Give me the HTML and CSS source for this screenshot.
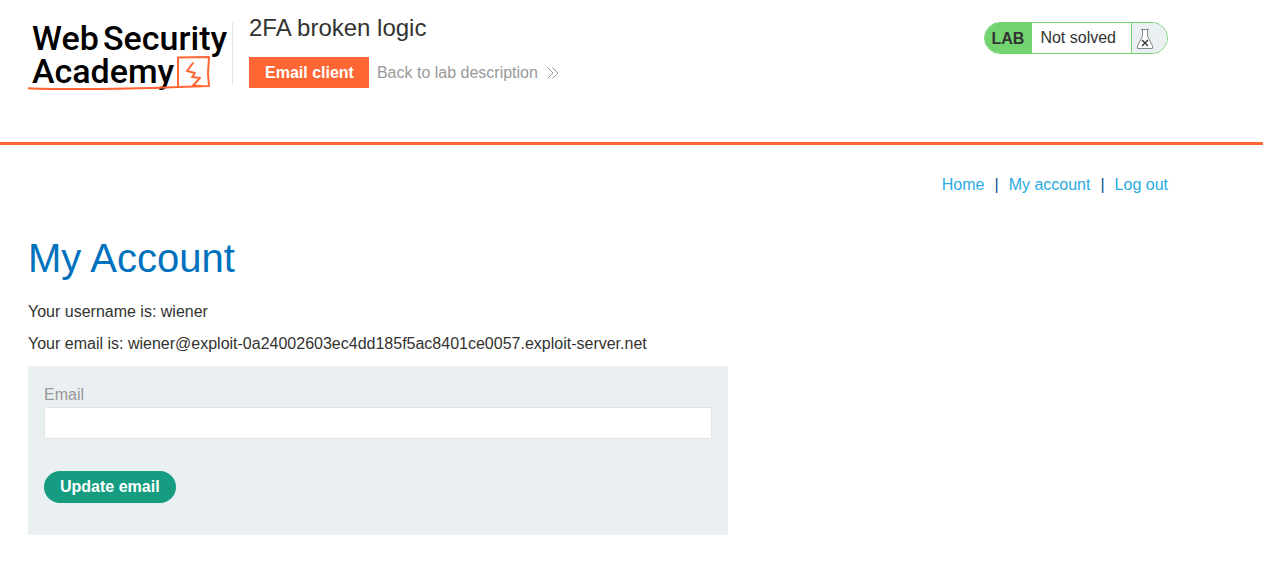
FILE: index.html
```
<!DOCTYPE html>
<html lang="en">
<head>
<meta charset="utf-8">
<meta name="viewport" content="width=device-width, initial-scale=1">
<title>2FA broken logic</title>
<link rel="stylesheet" href="styles.css">
</head>
<body>
<header class="lab-header">
  <div class="container lab-header-row">
    <a class="logo" href="#" aria-label="Web Security Academy">
      <svg width="204" height="72" viewBox="0 0 204 72" aria-hidden="true">
        <g class="logo-text">
          <text y="28"><tspan x="4">Web</tspan><tspan x="75">Security</tspan></text>
          <text x="4" y="61">Academy</text>
        </g>
        <g fill="none" stroke="#ff6633" stroke-linejoin="round" stroke-linecap="round">
          <path stroke-width="2" d="M1 66.500Q70 68 150 65L150 35.500L181 35L180 52L181 64L151 65"/>
          <path stroke-width="1" d="M0 66L20 67.500L80 67L130 66"/>
          <path stroke-width="2" d="M165 41L159 49L167 51L164 55L172 56L165 63.500L173 64"/>
        </g>
      </svg>
    </a>
    <div class="lab-title">
      <h2>2FA broken logic</h2>
      <div class="lab-links">
        <a class="button-orange" href="#">Email client</a>
        <a class="link-back" href="#">Back to lab description
          <svg width="12" height="12" viewBox="0 0 12 12" fill="none" stroke="currentColor" aria-hidden="true"><path d="M0.500 0.500L6 6L0.500 11.500M5.500 0.500L11 6L5.500 11.500"/></svg>
        </a>
      </div>
    </div>
    <div class="lab-status">
      <span class="status-tag">LAB</span>
      <span class="status-text">Not solved</span>
      <span class="status-icon">
        <svg width="18" height="21" viewBox="0 0 18 21" fill="none" aria-hidden="true">
          <path fill="#fff" stroke="#888" d="M5 1.500H13M6.500 1.500V8L1.500 18V20.500H16.500V18L11.500 8V1.500"/>
          <path stroke="#333" stroke-width="1.400" d="M6 12L12 18M12 12L6 18"/>
        </svg>
      </span>
    </div>
  </div>
</header>
<main class="container">
  <nav class="account-nav">
    <a href="#">Home</a><span>|</span><a href="#">My account</a><span>|</span><a href="#">Log out</a>
  </nav>
  <h1>My Account</h1>
  <p>Your username is: wiener</p>
  <p>Your email is: wiener@exploit-0a24002603ec4dd185f5ac8401ce0057.exploit-server.net</p>
  <form class="email-form">
    <label for="email">Email</label>
    <input id="email" type="email" name="email">
    <button type="submit">Update email</button>
  </form>
</main>
</body>
</html>
```

FILE: styles.css
```
* {
  box-sizing: border-box;
}

body {
  margin: 0;
  background: #fff;
  color: #333332;
  font: 16px/24px "Liberation Sans", Arial, sans-serif;
}

a {
  text-decoration: none;
}

.container {
  max-width: 1140px;
  margin: 0 95px 0 28px;
}

.lab-header {
  padding: 22px 0 50px;
  border-bottom: 3px solid #ff6633;
}

.lab-header-row {
  display: flex;
  align-items: flex-start;
}

.logo {
  display: flex;
  height: 70px;
}

.logo svg {
  overflow: visible;
}

.logo-text {
  fill: #000;
  font: 500 34px Roboto, "Liberation Sans", sans-serif;
}

.lab-title {
  flex: 1;
  height: 62px;
  padding-left: 16px;
  border-left: 1px solid #e4e4e4;
}

.lab-title h2 {
  margin: -8px 0 15px;
  font-size: 24px;
  line-height: 28px;
  font-weight: 400;
}

.lab-links {
  display: flex;
  align-items: center;
  gap: 8px;
}

.button-orange {
  padding: 4px 15px 3px 16px;
  background: #ff6633;
  color: #fff;
  font-weight: 700;
}

.link-back {
  display: flex;
  align-items: center;
  gap: 9px;
  color: #999;
}

.lab-status {
  display: flex;
  height: 32px;
  overflow: hidden;
  border: 1px solid #72d46f;
  border-radius: 16px;
  line-height: 30px;
}

.status-tag {
  padding: 1px 8px 0 7px;
  background: #72d46f;
  font-weight: 700;
}

.status-text {
  padding: 0 15px 0 8px;
}

.status-icon {
  display: flex;
  align-items: center;
  width: 36px;
  padding-left: 4px;
  border-left: 1px solid #72d46f;
  background: #eaeff2;
}

.account-nav {
  display: flex;
  justify-content: flex-end;
  gap: 10px;
  padding-top: 28px;
}

.account-nav a {
  color: #29abe2;
}

.account-nav span {
  color: #0b4f91;
}

h1 {
  margin: 37px 0 18px;
  color: #0071bc;
  font-size: 40px;
  line-height: 48px;
  font-weight: 400;
}

p {
  margin: 0 0 8px;
}

.email-form {
  display: flex;
  flex-direction: column;
  align-items: flex-start;
  max-width: 700px;
  margin-top: 10px;
  padding: 17px 16px 32px;
  background: #eaeff2;
}

.email-form label {
  color: #999;
}

.email-form input {
  width: 100%;
  height: 32px;
  margin: 0 0 32px;
  padding: 0 8px;
  border: 1px solid #e4e4e4;
  background: #fff;
  font: inherit;
}

.email-form button {
  height: 32px;
  padding: 0 16px;
  border: 0;
  border-radius: 16px;
  background: #169c80;
  color: #fff;
  font: inherit;
  font-weight: 700;
}
```
